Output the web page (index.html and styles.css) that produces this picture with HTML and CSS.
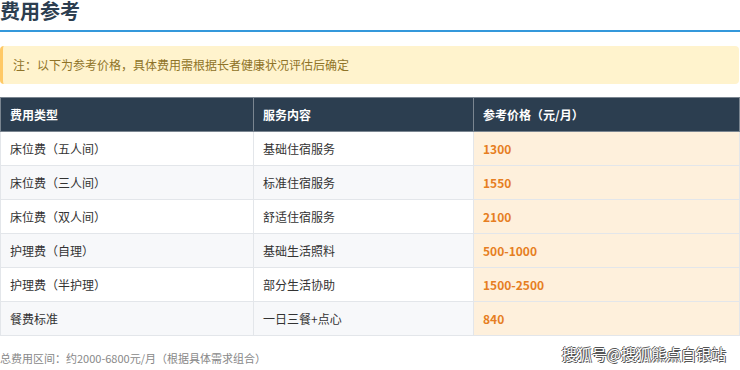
FILE: index.html
```html
<!DOCTYPE html>
<html lang="zh-CN">
<head>
    <meta charset="UTF-8">
    <title>费用参考</title>
    <link rel="stylesheet" href="styles.css">
</head>
<body>
    <div class="section">
        <h2 class="section-title">费用参考</h2>
        <div class="notice">注：以下为参考价格，具体费用需根据长者健康状况评估后确定</div>
        <table class="fee-table">
            <thead>
                <tr>
                    <th class="col-type">费用类型</th>
                    <th class="col-service">服务内容</th>
                    <th>参考价格（元/月）</th>
                </tr>
            </thead>
            <tbody>
                <tr><td>床位费（五人间）</td><td>基础住宿服务</td><td class="price">1300</td></tr>
                <tr><td>床位费（三人间）</td><td>标准住宿服务</td><td class="price">1550</td></tr>
                <tr><td>床位费（双人间）</td><td>舒适住宿服务</td><td class="price">2100</td></tr>
                <tr><td>护理费（自理）</td><td>基础生活照料</td><td class="price">500-1000</td></tr>
                <tr><td>护理费（半护理）</td><td>部分生活协助</td><td class="price">1500-2500</td></tr>
                <tr><td>餐费标准</td><td>一日三餐+点心</td><td class="price">840</td></tr>
            </tbody>
        </table>
        <p class="summary">总费用区间：约2000-6800元/月（根据具体需求组合）</p>
        <div class="watermark">搜狐号@搜狐熊点白银站</div>
    </div>
</body>
</html>
```

FILE: styles.css
```css
body {
    margin: 0;
    font-family: "Noto Sans CJK SC", "Noto Sans", sans-serif;
    color: #333;
    background: #fff;
    overflow: hidden;
}

.section {
    position: relative;
    width: 740px;
    height: 370px;
}

.section-title {
    margin: 0;
    padding-bottom: 8px;
    font-size: 20px;
    line-height: 22px;
    font-weight: bold;
    color: #2c3e50;
    border-bottom: 2px solid #3498db;
}

.notice {
    margin: 14px 1px 0 0;
    padding: 0 10px;
    height: 38px;
    line-height: 38px;
    font-size: 12px;
    color: #8f7328;
    background-color: #fff3cd;
    border-left: 3px solid #ffc966;
    border-radius: 4px;
}

.fee-table {
    margin-top: 13px;
    width: 740px;
    border-collapse: collapse;
    font-size: 12px;
    border: 1px solid #dde1e5;
}
.fee-table th,
.fee-table td {
    height: 33px;
    padding: 0 9px;
    text-align: left;
    border: 1px solid #e3e6ea;
}
.fee-table th {
    background-color: #2c3e50;
    color: #fff;
    font-weight: bold;
    border-color: #7a8590;
}
.col-type { width: 234px; }
.col-service { width: 201px; }
.fee-table tbody tr:nth-child(even) td {
    background-color: #f7f8fa;
}
.fee-table td.price,
.fee-table tbody tr:nth-child(even) td.price {
    background-color: #fef0dc;
    color: #e67e22;
    font-weight: bold;
}

.summary {
    margin: 14px 0 0 0;
    font-size: 11px;
    color: #888;
}

.watermark {
    position: absolute;
    right: 14px;
    top: 343px;
    font-size: 15px;
    color: #fff;
    text-shadow: 1px 1px 0 #555, -1px 0 0 #555, 0 -1px 0 #555;
}
```
